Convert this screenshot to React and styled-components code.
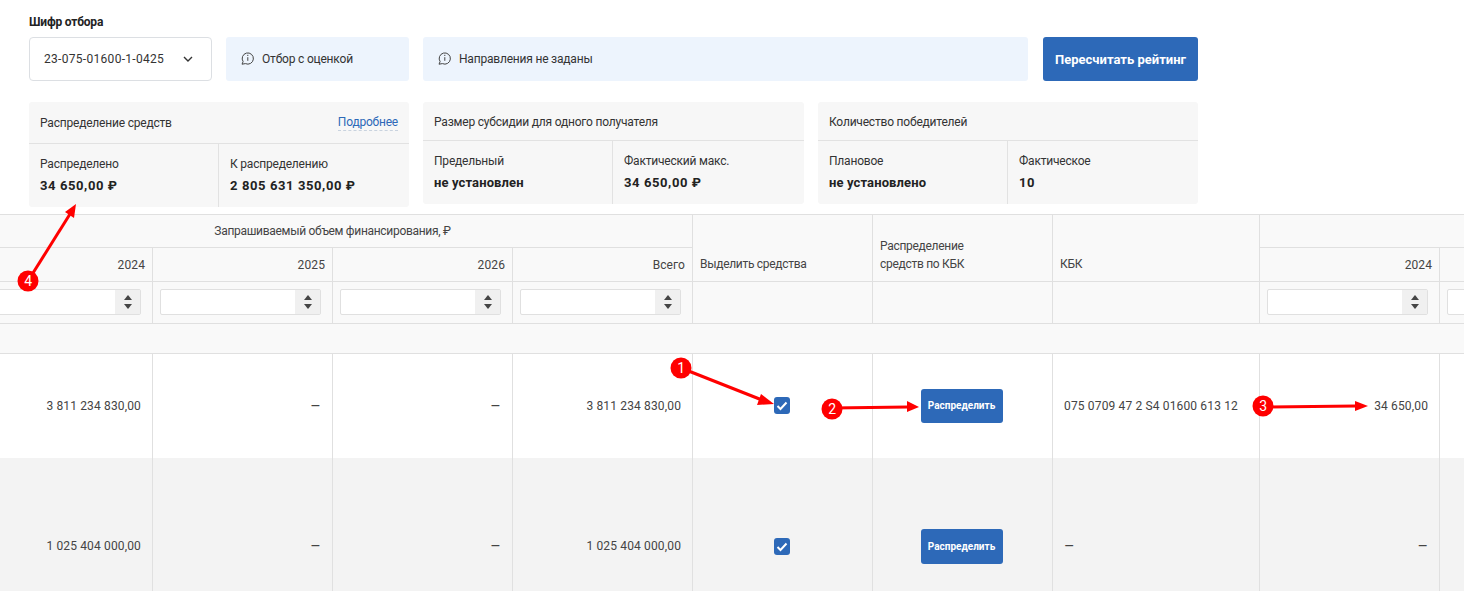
import React from "react";
import styled, { createGlobalStyle } from "styled-components";

const GlobalStyle = createGlobalStyle`
	html, body {
		margin: 0;
		padding: 0;
		background: #fff;
	}
	body {
		font-family: Roboto, "Liberation Sans", sans-serif;
		font-size: 12px;
		letter-spacing: -0.2px;
		color: #333;
	}
	* {
		box-sizing: border-box;
	}
`;

const Page = styled.div`
	position: relative;
	width: 1464px;
	height: 591px;
	overflow: hidden;
`;

const Top = styled.div`
	padding: 15px 0 0 29px;
`;

const Label = styled.div`
	font-size: 12px;
	line-height: 15px;
	font-weight: 700;
	color: #222;
	margin-bottom: 7px;
`;

const FilterRow = styled.div`
	display: grid;
	grid-template-columns: 183px 183px 605px 156px;
	column-gap: 14px;
	height: 44px;
`;

const Select = styled.div`
	display: flex;
	align-items: center;
	justify-content: space-between;
	padding: 0 18px 0 14px;
	border: 1px solid #dcdfe3;
	border-radius: 4px;
	background: #fff;
	letter-spacing: 0.3px;
`;

const Note = styled.div`
	display: flex;
	align-items: center;
	gap: 7px;
	padding-left: 14px;
	background: #edf4fd;
	border-radius: 3px;
	svg {
		margin-top: -2px;
	}
`;

const RecalcButton = styled.button`
	margin-left: 1px;
	border: 0;
	border-radius: 3px;
	background: #2d69b8;
	color: #fff;
	font: 700 13px Roboto, sans-serif;
`;

const CardRow = styled.div`
	display: flex;
	align-items: flex-start;
	gap: 14px;
	margin-top: 21px;
`;

const Card = styled.section`
	width: ${(p) => p.$width}px;
	background: #f7f7f7;
	border-radius: 3px;
	overflow: hidden;
`;

const CardHead = styled.div`
	display: flex;
	align-items: center;
	justify-content: space-between;
	height: ${(p) => (p.$tall ? 42 : 39)}px;
	padding: ${(p) => (p.$tall ? "0 11px" : "1px 11px 0")};
	border-bottom: 1px solid #e2e2e2;
`;

const MoreLink = styled.a`
	color: #2d69b8;
	border-bottom: 1px dashed #c9d3df;
	line-height: 15px;
`;

const CardBody = styled.div`
	display: grid;
	grid-template-columns: 189px 1fr;
	height: 63px;
`;

const Stat = styled.div`
	padding: 12px 11px 0;
	& + & {
		border-left: 1px solid #e2e2e2;
	}
`;

const StatName = styled.div`
	line-height: 16px;
`;

const StatValue = styled.div`
	margin-top: 6px;
	font-size: 13px;
	line-height: 16px;
	font-weight: 700;
	color: #222;
	letter-spacing: ${(p) => (p.$num ? "0.6px" : "0.12px")};
`;

const Table = styled.table`
	table-layout: fixed;
	width: 1848px;
	margin: 7px 0 0 -28px;
	border-collapse: collapse;
`;

const Th = styled.th`
	height: ${(p) => p.$h}px;
	padding: 0 7px;
	background: #f9f9f9;
	border: 1px solid #e0e0e0;
	font-weight: 400;
	line-height: 18px;
	color: #444;
	letter-spacing: ${(p) => (p.$align === "right" ? "0.1px" : "-0.3px")};
	text-align: ${(p) => p.$align || "left"};
	vertical-align: ${(p) => (p.$bottom ? "bottom" : "middle")};
	padding-bottom: ${(p) => (p.$bottom ? "8px" : "0")};
`;

const Row = styled.tr`
	background: ${(p) => (p.$alt ? "#f3f3f3" : "#fff")};
`;

const Td = styled.td`
	height: ${(p) => p.$h}px;
	padding: 1px 11px 0;
	border-left: 1px solid #e0e0e0;
	border-right: 1px solid #e0e0e0;
	color: #444;
	letter-spacing: 0.15px;
	text-align: ${(p) => p.$align || "right"};
`;

const ControlCell = styled.td`
	padding: ${(p) => (p.$alt ? "2px" : "0")} 12px 0 10px;
	border-left: 1px solid #e0e0e0;
	border-right: 1px solid #e0e0e0;
	text-align: center;
`;

const Dash = styled.span`
	font-size: 16px;
	line-height: 14px;
	vertical-align: -2px;
`;

const Spin = styled.div`
	display: flex;
	justify-content: flex-end;
	height: 26px;
	margin: 0 4px 2px 0;
	background: #fff;
	border: 1px solid #e0e0e0;
	border-radius: 2px;
`;

const SpinButtons = styled.div`
	display: flex;
	flex-direction: column;
	align-items: center;
	justify-content: center;
	gap: 4px;
	width: 25px;
	background: #f0f0f0;
`;

const Triangle = styled.span`
	width: 0;
	height: 0;
	border-left: 4px solid transparent;
	border-right: 4px solid transparent;
	${(p) => (p.$down ? "border-top: 5px solid #444;" : "border-bottom: 5px solid #444;")}
`;

const Check = styled.span`
	display: inline-flex;
	align-items: center;
	justify-content: center;
	width: 16px;
	height: 17px;
	background: #2d69b8;
	border-radius: 3px;
	vertical-align: middle;
`;

const AllotButton = styled.button`
	width: 82px;
	height: ${(p) => p.$h}px;
	border: 0;
	border-radius: 3px;
	background: #2d69b8;
	color: #fff;
	font: 700 10px Roboto, sans-serif;
	vertical-align: middle;
`;

const Marks = styled.svg`
	position: absolute;
	left: 0;
	top: 0;
	pointer-events: none;
`;

const MarkNumber = styled.text`
	fill: #fff;
	font-size: 14px;
	text-anchor: middle;
`;

const InfoIcon = () => (
	<svg width="15" height="15" viewBox="0 0 15 15" fill="none" stroke="#444" strokeWidth="1">
		<path d="M2 13.2 3.1 10.6A5.6 5.6 0 1 1 5.4 12.6Z" strokeLinejoin="round" />
		<path d="M7.8 3.8v1.2M7.8 6.2v3.6" />
	</svg>
);

const Chevron = () => (
	<svg width="10" height="6" viewBox="0 0 10 6" fill="none" stroke="#333" strokeWidth="1.4">
		<path d="M1 1l4 4 4-4" />
	</svg>
);

const Tick = () => (
	<svg width="12" height="10" viewBox="0 0 12 10" fill="none" stroke="#fff" strokeWidth="2">
		<path d="M1.5 5l3 3 6-6.5" />
	</svg>
);

const Stepper = () => (
	<Spin>
		<SpinButtons>
			<Triangle />
			<Triangle $down />
		</SpinButtons>
	</Spin>
);

const marks = [
	{ n: 1, x: 681, y: 368, d: "M681 368 762 400", tip: "761,394 774,404 757,405" },
	{ n: 2, x: 832, y: 409, d: "M832 408 908 407", tip: "907,401 919,407 907,412" },
	{ n: 3, x: 1263, y: 406, d: "M1263 407 1356 406", tip: "1355,401 1368,406 1355,411" },
	{ n: 4, x: 28, y: 281, d: "M28 281 70 214", tip: "65,212 76,204 74,218" },
];

const cards = [
	{ width: 380, title: "Распределение средств", tall: true, items: [["Распределено", "34 650,00 ₽", true], ["К распределению", "2 805 631 350,00 ₽", true]] },
	{ width: 381, title: "Размер субсидии для одного получателя", items: [["Предельный", "не установлен"], ["Фактический макс.", "34 650,00 ₽", true]] },
	{ width: 380, title: "Количество победителей", items: [["Плановое", "не установлено"], ["Фактическое", "10", true]] },
];

const widths = [180, 180, 180, 180, 180, 180, 207, 180, 180, 221];

function App() {
	return (
		<Page>
			<GlobalStyle />
			<Top>
				<Label>Шифр отбора</Label>
				<FilterRow>
					<Select>
						23-075-01600-1-0425
						<Chevron />
					</Select>
					<Note>
						<InfoIcon />
						Отбор с оценкой
					</Note>
					<Note>
						<InfoIcon />
						Направления не заданы
					</Note>
					<RecalcButton>Пересчитать рейтинг</RecalcButton>
				</FilterRow>
				<CardRow>
					{cards.map((card) => (
						<Card key={card.title} $width={card.width}>
							<CardHead $tall={card.tall}>
								{card.title}
								{card.tall && <MoreLink>Подробнее</MoreLink>}
							</CardHead>
							<CardBody>
								{card.items.map(([name, value, num]) => (
									<Stat key={name}>
										<StatName>{name}</StatName>
										<StatValue $num={num}>{value}</StatValue>
									</Stat>
								))}
							</CardBody>
						</Card>
					))}
				</CardRow>
			</Top>
			<Table>
				<colgroup>
					{widths.map((w, i) => (
						<col key={i} width={w} />
					))}
				</colgroup>
				<thead>
					<tr>
						<Th colSpan={4} $h={33} $align="center">
							Запрашиваемый объем финансирования, ₽
						</Th>
						<Th rowSpan={2} $bottom>Выделить средства</Th>
						<Th rowSpan={2} $bottom>
							Распределение
							<br />
							средств по КБК
						</Th>
						<Th rowSpan={2} $bottom>КБК</Th>
						<Th colSpan={3} />
					</tr>
					<tr>
						<Th $h={34} $align="right">2024</Th>
						<Th $align="right">2025</Th>
						<Th $align="right">2026</Th>
						<Th $align="right">Всего</Th>
						<Th $align="right">2024</Th>
						<Th />
						<Th />
					</tr>
					<tr>
						<Th $h={42}><Stepper /></Th>
						<Th><Stepper /></Th>
						<Th><Stepper /></Th>
						<Th><Stepper /></Th>
						<Th />
						<Th />
						<Th />
						<Th><Stepper /></Th>
						<Th><Stepper /></Th>
						<Th><Stepper /></Th>
					</tr>
					<tr>
						<Th colSpan={10} $h={30} />
					</tr>
				</thead>
				<tbody>
					<Row>
						<Td $h={104}>3 811 234 830,00</Td>
						<Td><Dash>–</Dash></Td>
						<Td><Dash>–</Dash></Td>
						<Td>3 811 234 830,00</Td>
						<ControlCell><Check><Tick /></Check></ControlCell>
						<ControlCell><AllotButton $h={34}>Распределить</AllotButton></ControlCell>
						<Td $align="left">075 0709 47 2 S4 01600 613 12</Td>
						<Td>34 650,00</Td>
						<Td />
						<Td />
					</Row>
					<Row $alt>
						<Td $h={176}>1 025 404 000,00</Td>
						<Td><Dash>–</Dash></Td>
						<Td><Dash>–</Dash></Td>
						<Td>1 025 404 000,00</Td>
						<ControlCell $alt><Check><Tick /></Check></ControlCell>
						<ControlCell $alt><AllotButton $h={35}>Распределить</AllotButton></ControlCell>
						<Td $align="left"><Dash>–</Dash></Td>
						<Td><Dash>–</Dash></Td>
						<Td />
						<Td />
					</Row>
				</tbody>
			</Table>
			<Marks width="1464" height="591" viewBox="0 0 1464 591">
				{marks.map((m) => (
					<g key={m.n}>
						<path d={m.d} stroke="#f00" strokeWidth="3" fill="none" />
						<polygon points={m.tip} fill="#f00" />
						<circle cx={m.x} cy={m.y} r="10.5" fill="#f00" />
						<MarkNumber x={m.x} y={m.y + 5}>{m.n}</MarkNumber>
					</g>
				))}
			</Marks>
		</Page>
	);
}

export default App;
